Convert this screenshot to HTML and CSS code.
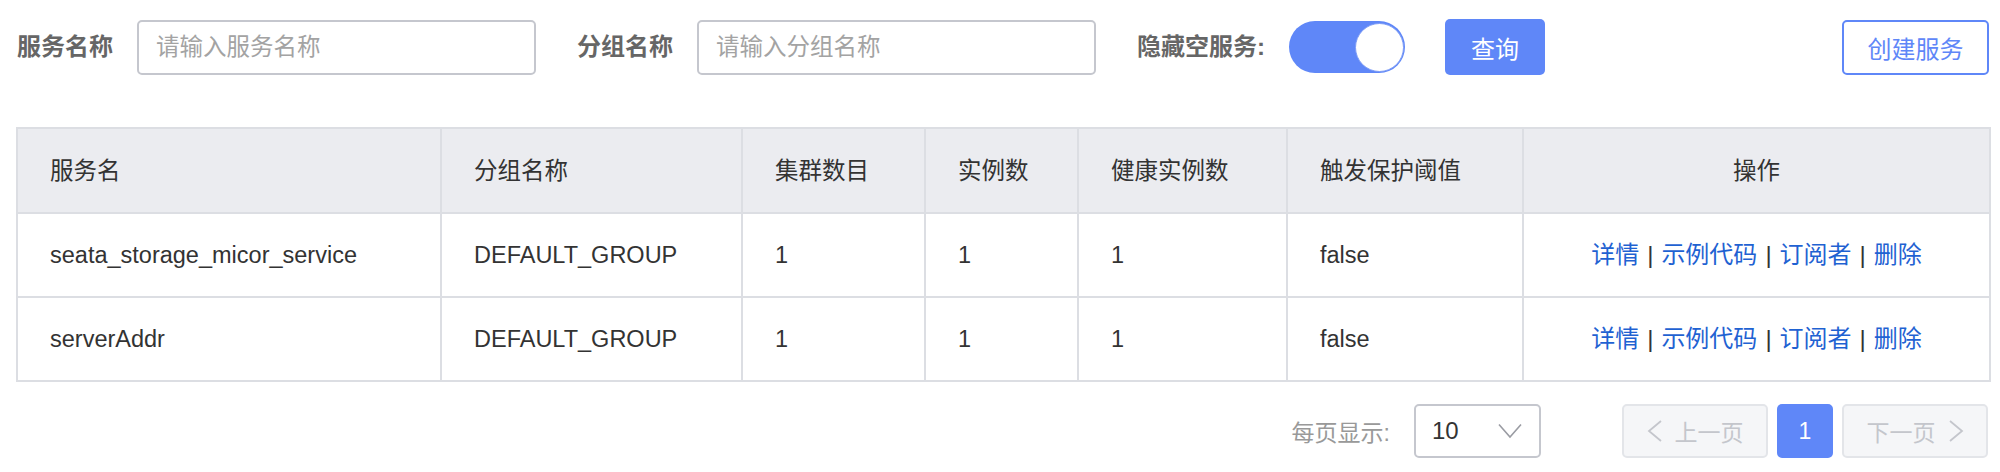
FILE: index.html
```html
<!DOCTYPE html>
<html lang="zh-CN">
<head>
<meta charset="utf-8">
<title>服务列表</title>
<link rel="stylesheet" href="styles.css">
</head>
<body>
<div class="page">
  <div class="toolbar">
    <div class="form-item">
      <span class="form-label">服务名称</span>
      <input class="text-input" type="text" placeholder="请输入服务名称">
    </div>
    <div class="form-item">
      <span class="form-label">分组名称</span>
      <input class="text-input" type="text" placeholder="请输入分组名称">
    </div>
    <div class="form-item">
      <span class="form-label">隐藏空服务:</span>
      <div class="switch"><span class="switch-knob"></span></div>
    </div>
    <button class="btn btn-primary">查询</button>
    <button class="btn btn-outline">创建服务</button>
  </div>

  <table class="data-table">
    <colgroup>
      <col class="c1"><col class="c2"><col class="c3"><col class="c4"><col class="c5"><col class="c6"><col class="c7">
    </colgroup>
    <thead>
      <tr>
        <th>服务名</th>
        <th>分组名称</th>
        <th>集群数目</th>
        <th>实例数</th>
        <th>健康实例数</th>
        <th>触发保护阈值</th>
        <th class="center">操作</th>
      </tr>
    </thead>
    <tbody>
      <tr>
        <td>seata_storage_micor_service</td>
        <td>DEFAULT_GROUP</td>
        <td>1</td>
        <td>1</td>
        <td>1</td>
        <td>false</td>
        <td class="center ops"><a>详情</a><span class="sep">|</span><a>示例代码</a><span class="sep">|</span><a>订阅者</a><span class="sep">|</span><a>删除</a></td>
      </tr>
      <tr>
        <td>serverAddr</td>
        <td>DEFAULT_GROUP</td>
        <td>1</td>
        <td>1</td>
        <td>1</td>
        <td>false</td>
        <td class="center ops"><a>详情</a><span class="sep">|</span><a>示例代码</a><span class="sep">|</span><a>订阅者</a><span class="sep">|</span><a>删除</a></td>
      </tr>
    </tbody>
  </table>

  <div class="pager">
    <span class="pager-label">每页显示:</span>
    <div class="select">
      <span>10</span>
      <svg class="chev-down" width="24" height="16" viewBox="0 0 24 16"><path d="M1 1.5 L12 14 L23 1.5" fill="none" stroke="#9a9ca3" stroke-width="1.6"/></svg>
    </div>
    <div class="pages">
      <button class="page-btn disabled">
        <svg width="16" height="22" viewBox="0 0 16 22"><path d="M14 1 L2 11 L14 21" fill="none" stroke="#c4c6cc" stroke-width="1.8"/></svg>
        <span>上一页</span>
      </button>
      <button class="page-num current">1</button>
      <button class="page-btn disabled">
        <span>下一页</span>
        <svg width="16" height="22" viewBox="0 0 16 22"><path d="M2 1 L14 11 L2 21" fill="none" stroke="#c4c6cc" stroke-width="1.8"/></svg>
      </button>
    </div>
  </div>
</div>
</body>
</html>
```

FILE: styles.css
```css
* { box-sizing: border-box; }

body {
  margin: 0;
  background: #ffffff;
  font-family: "Liberation Sans", "Noto Sans CJK SC", sans-serif;
  color: #333333;
}

.page {
  padding: 19px 11px 0 16px;
}

.toolbar {
  display: flex;
  align-items: center;
  height: 56px;
  padding-left: 1px;
}

.form-item {
  display: flex;
  align-items: center;
  gap: 24px;
  margin-right: 41px;
}

.form-label {
  font-size: 24px;
  font-weight: bold;
  color: #666666;
  line-height: 30px;
  white-space: nowrap;
}

.text-input {
  width: 399px;
  height: 55px;
  border: 2px solid #c5c7ce;
  border-radius: 5px;
  padding: 0 17px;
  font-family: "Liberation Sans", "Noto Sans CJK SC", sans-serif;
  font-size: 23.5px;
  color: #333333;
  outline: none;
  background: #ffffff;
}

.text-input::placeholder {
  color: #a3a3a3;
}

.switch {
  width: 116px;
  height: 52px;
  border-radius: 26px;
  background: #5f87f8;
  display: flex;
  justify-content: flex-end;
  align-items: center;
  padding: 0 1px;
}

.switch-knob {
  width: 49px;
  height: 49px;
  border-radius: 50%;
  background: #ffffff;
  border: 1px solid #7d9cf6;
}

.btn {
  font-family: "Liberation Sans", "Noto Sans CJK SC", sans-serif;
  font-size: 24px;
  height: 56px;
  border-radius: 5px;
  cursor: pointer;
  padding: 0;
}

.btn-primary {
  width: 100px;
  margin-left: -1px;
  background: #5f87f8;
  color: #ffffff;
  border: none;
}

.btn-outline {
  margin-left: auto;
  width: 147px;
  height: 55px;
  background: #ffffff;
  color: #5f87f8;
  border: 2px solid #5f87f8;
}

.data-table {
  margin-top: 52px;
  width: 1973px;
  table-layout: fixed;
  border-collapse: collapse;
  font-size: 23.5px;
  border: 2px solid #dcdee3;
}

.c1 { width: 424px; }
.c2 { width: 301px; }
.c3 { width: 183px; }
.c4 { width: 153px; }
.c5 { width: 209px; }
.c6 { width: 236px; }
.c7 { width: 467px; }

.data-table th,
.data-table td {
  border: 2px solid #dcdee3;
  text-align: left;
  padding: 0 0 0 32px;
  line-height: 30px;
  white-space: nowrap;
  color: #333333;
}

.data-table th {
  background: #ebecf0;
  font-weight: normal;
  height: 85px;
}

.data-table td {
  height: 84px;
}

.data-table .center {
  text-align: center;
  padding-left: 0;
}

.ops {
  font-size: 24px;
}

.ops a {
  color: #1f62d2;
  cursor: pointer;
}

.ops .sep {
  margin: 0 8px;
  color: #333333;
}

.pager {
  display: flex;
  align-items: center;
  justify-content: flex-end;
  margin-top: 22px;
  padding-right: 1px;
}

.pager-label {
  font-size: 23px;
  color: #999999;
  margin-right: 24px;
}

.select {
  width: 127px;
  height: 54px;
  border: 2px solid #c5c7ce;
  border-radius: 5px;
  display: flex;
  align-items: center;
  justify-content: space-between;
  padding: 0 17px 0 16px;
  font-size: 24px;
  color: #333333;
  margin-right: 81px;
}

.pages {
  display: flex;
  gap: 9px;
}

.page-btn,
.page-num {
  font-family: "Liberation Sans", "Noto Sans CJK SC", sans-serif;
  font-size: 23px;
  height: 54px;
  border-radius: 5px;
  padding: 0;
  display: flex;
  align-items: center;
  justify-content: center;
  gap: 12px;
}

.page-btn {
  width: 146px;
  background: #f5f6f8;
  border: 2px solid #e3e5e9;
  color: #c4c6cc;
}

.page-num {
  width: 56px;
  background: #5f87f8;
  border: none;
  color: #ffffff;
}
```
